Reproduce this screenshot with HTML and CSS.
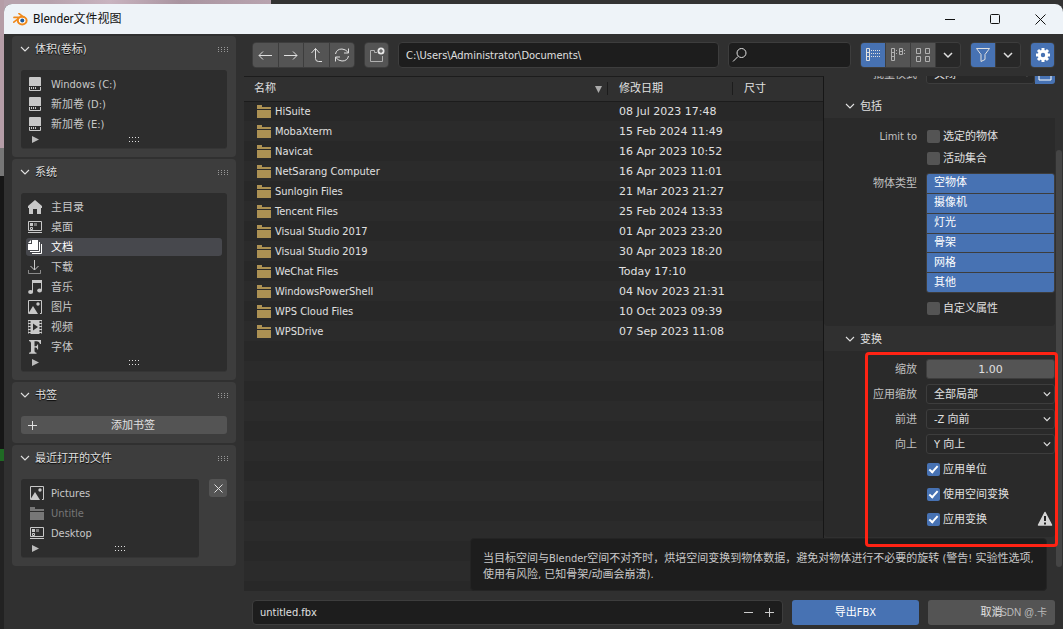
FILE: index.html
```html
<!DOCTYPE html>
<html lang="zh-CN">
<head>
<meta charset="utf-8">
<title>Blender文件视图</title>
<link rel="stylesheet" href="styles.css">
</head>
<body>
<svg class="defs" aria-hidden="true">
  <symbol id="chev" viewBox="0 0 10 10"><path d="M1 3l4 4 4-4" fill="none" stroke="currentColor" stroke-width="1.1"/></symbol>
  <symbol id="chevb" viewBox="0 0 10 10"><path d="M1 3l4 4 4-4" fill="none" stroke="currentColor" stroke-width="1.500"/></symbol>
  <symbol id="grip" viewBox="0 0 11 5"><path d="M0 .5h11M0 4.5h11" stroke="currentColor" stroke-dasharray="1 2"/></symbol>
  <symbol id="grip3" viewBox="0 0 11 5"><path d="M0 .5h11M0 2.5h11M0 4.5h11" stroke="currentColor" stroke-dasharray="1 2"/></symbol>
  <symbol id="disk" viewBox="0 0 14 14"><path d="M1 1a1 1 0 0 1 1-1h10a1 1 0 0 1 1 1v8H1zM1 10h12v3a1 1 0 0 1-1 1H2a1 1 0 0 1-1-1z" fill="currentColor"/><path d="M2 9h10v4H2z" fill="#2d2d2d"/><path d="M3 10h1v2H3zM5 10h1v2H5zM7 10h1v2H7z" fill="currentColor"/></symbol>
  <symbol id="home" viewBox="0 0 14 14"><path d="M7 0l7 6v2h-1v6H9V9H5v5H1V8H0V6z" fill="currentColor"/></symbol>
  <symbol id="desk" viewBox="0 0 14 14"><path d="M.5 1.500h13v9H.5zM0 12.500h14" fill="none" stroke="currentColor"/><path d="M2 3h3v3H2z" fill="currentColor"/><path d="M6 3h3v3H6z" fill="currentColor" opacity=".5"/><path d="M2.500 7.500h2v2h-2z" fill="none" stroke="currentColor"/></symbol>
  <symbol id="docs" viewBox="0 0 14 14"><path d="M4 0h6v10H0V4h4z" fill="currentColor"/><path d="M0 3l3-3v3z" fill="currentColor"/><path d="M11.500 2v9.500H2M13.500 4v9.500H4" fill="none" stroke="currentColor"/></symbol>
  <symbol id="down" viewBox="0 0 14 14"><path d="M6.500 0v10M2.500 6l4 4 4-4" fill="none" stroke="currentColor"/><path d="M.5 10v3.500h12V10" fill="none" stroke="currentColor" opacity=".6"/></symbol>
  <symbol id="music" viewBox="0 0 14 14"><path d="M4 0h10v10h-1V3H5v9H4z" fill="currentColor"/><ellipse cx="2.600" cy="12" rx="2.500" ry="2" fill="currentColor"/><ellipse cx="11.600" cy="10.500" rx="2.400" ry="2" fill="currentColor"/></symbol>
  <symbol id="image" viewBox="0 0 14 14"><path d="M.5 13V.5h13v13H12" fill="none" stroke="currentColor"/><path d="M0 14l5-8 5 8z" fill="currentColor"/><circle cx="10" cy="4" r="1.700" fill="currentColor"/></symbol>
  <symbol id="film" viewBox="0 0 14 14"><path d="M0 0h14v14H0z" fill="currentColor"/><path d="M5 3.500v7L10 7z" fill="#2d2d2d"/><path d="M1.500 1v13M12.500 1v13" stroke="#2d2d2d" stroke-width="2" stroke-dasharray="2 1"/></symbol>
  <symbol id="font" viewBox="0 0 14 14"><path d="M1 0h12v4h-1q-.5-2.700-3-2.700H6.500v5h1.200q1.500 0 1.600-1.800h.8v5h-.8q-.1-1.900-1.600-1.900H6.500v3.600q0 1.300 2 1.500v1H1v-1q2-.2 2-1.500V3q0-1.600-2-1.900z" fill="currentColor"/></symbol>
  <symbol id="folder" viewBox="0 0 14 14"><path d="M0 1h5v2h9v2H0zM0 6h14v8H0z" fill="currentColor"/></symbol>
</svg>
<main class="window">
  <header class="titlebar">
    <svg class="logo" width="15" height="13" viewBox="0 0 15 13"><path d="M6 .6l6.500 5M1 4.400h7M.8 9.200L7 4.400" fill="none" stroke="#f08a1c" stroke-width="1.700" stroke-linecap="round"/><ellipse cx="9.200" cy="7.600" rx="4.400" ry="3.800" fill="#fff" stroke="#f08a1c" stroke-width="2"/><circle cx="9.300" cy="7.400" r="2" fill="#1f5b9c"/></svg>
    <h1>Blender文件视图</h1>
    <div class="winbtns">
      <button aria-label="最小化"><svg width="11" height="11"><path d="M0 5.500h10" stroke="#111"/></svg></button>
      <button aria-label="最大化"><svg width="11" height="11"><rect x=".5" y=".5" width="9" height="9" rx="1" fill="none" stroke="#111"/></svg></button>
      <button aria-label="关闭"><svg width="11" height="11"><path d="M.5.5l10 10M10.500.5l-10 10" stroke="#111"/></svg></button>
    </div>
  </header>
  <div class="body">
    <aside class="side">
      <section class="panel">
        <h2><svg class="i10"><use href="#chev"/></svg>体积(卷标)<svg class="grip"><use href="#grip3"/></svg></h2>
        <div class="list">
          <button class="item"><svg class="i14"><use href="#disk"/></svg>Windows (C:)</button>
          <button class="item"><svg class="i14"><use href="#disk"/></svg>新加卷 (D:)</button>
          <button class="item"><svg class="i14"><use href="#disk"/></svg>新加卷 (E:)</button>
          <div class="foot"><svg width="7" height="7"><path d="M0 0l7 3.500L0 7z" fill="#bbb"/></svg><svg class="grip"><use href="#grip"/></svg></div>
        </div>
      </section>
      <section class="panel">
        <h2><svg class="i10"><use href="#chev"/></svg>系统<svg class="grip"><use href="#grip3"/></svg></h2>
        <div class="list">
          <button class="item"><svg class="i14"><use href="#home"/></svg>主目录</button>
          <button class="item"><svg class="i14"><use href="#desk"/></svg>桌面</button>
          <button class="item on"><svg class="i14"><use href="#docs"/></svg>文档</button>
          <button class="item"><svg class="i14"><use href="#down"/></svg>下载</button>
          <button class="item"><svg class="i14"><use href="#music"/></svg>音乐</button>
          <button class="item"><svg class="i14"><use href="#image"/></svg>图片</button>
          <button class="item"><svg class="i14"><use href="#film"/></svg>视频</button>
          <button class="item"><svg class="i14"><use href="#font"/></svg>字体</button>
          <div class="foot"><svg width="7" height="7"><path d="M0 0l7 3.500L0 7z" fill="#bbb"/></svg><svg class="grip"><use href="#grip"/></svg></div>
        </div>
      </section>
      <section class="panel">
        <h2><svg class="i10"><use href="#chev"/></svg>书签<svg class="grip"><use href="#grip3"/></svg></h2>
        <button class="add"><svg width="9" height="9"><path d="M4.500 0v9M0 4.500h9" stroke="#e0e0e0"/></svg><span>添加书签</span></button>
      </section>
      <section class="panel">
        <h2><svg class="i10"><use href="#chev"/></svg>最近打开的文件<svg class="grip"><use href="#grip3"/></svg></h2>
        <div class="recent">
          <div class="list wide">
            <button class="item"><svg class="i14"><use href="#image"/></svg>Pictures</button>
            <button class="item dim"><svg class="i14"><use href="#folder"/></svg>Untitle</button>
            <button class="item"><svg class="i14"><use href="#desk"/></svg>Desktop</button>
            <div class="foot"><svg width="7" height="7"><path d="M0 0l7 3.500L0 7z" fill="#bbb"/></svg><svg class="grip"><use href="#grip"/></svg></div>
          </div>
          <button class="clear" aria-label="清除"><svg width="9" height="9"><path d="M.5.5l8 8M8.500.5l-8 8" stroke="#e0e0e0"/></svg></button>
        </div>
      </section>
    </aside>
    <div class="content">
      <div class="toolbar">
        <div class="group nav">
          <button aria-label="后退"><svg width="16" height="16"><path d="M15 8.500H2M6 4.500l-4 4 4 4"/></svg></button>
          <button aria-label="前进"><svg width="16" height="16"><path d="M1 8.500h13M10 4.500l4 4-4 4"/></svg></button>
          <button aria-label="上级"><svg width="16" height="16"><path d="M3.500 6l4-4.500 4 4.500M7.500 1.500v10q0 3 3 3H14"/></svg></button>
          <button aria-label="刷新"><svg width="16" height="16"><path d="M1.500 7Q2.500 2 8 2q4 0 6.500 4M14.500 1.500V6H10M14.500 9q-1 5-6.500 5-4 0-6.500-4M1.500 14.500V10H6"/></svg></button>
        </div>
        <div class="group single"><button aria-label="新建文件夹"><svg width="16" height="16"><path d="M8 5.500H5.500v-2h-4v11h12V9" class="faint"/><circle cx="12" cy="4" r="3.500" class="solid"/><path d="M12 2v4M10 4h4" class="cut"/></svg></button></div>
        <input class="path" aria-label="路径" value="C:\Users\Administrator\Documents\">
        <label class="search"><svg width="16" height="16"><circle cx="9.500" cy="6" r="4.500"/><path d="M6 9.500L1 14.500"/></svg><input aria-label="搜索"></label>
        <div class="group">
          <button class="blue" aria-label="垂直列表"><svg width="16" height="16"><path d="M1.500 1.500h3v12h-3zM1.500 5.500h3M1.500 9.500h3"/><path d="M6 3.500h9M6 6.500h9M6 9.500h9" stroke-dasharray="1 1"/></svg></button>
          <button aria-label="水平列表"><svg class="faint" width="16" height="16"><path d="M1.500 1.500h3v12h-3zM1.500 5.500h3M1.500 9.500h3M9.500 1.500h3v6h-3zM9.500 4.500h3"/><path d="M6.500 3v6M14.500 3v5" stroke-dasharray="1 2"/></svg></button>
          <button aria-label="缩略图"><svg class="faint" width="16" height="16"><path d="M1.500 1.500h4v5h-4zM10.500 1.500h4v5h-4zM1.500 9.500h4v5h-4zM10.500 9.500h4v5h-4z"/></svg></button>
          <button class="dark" aria-label="显示设置"><svg class="i10"><use href="#chevb"/></svg></button>
        </div>
        <div class="group">
          <button class="blue" aria-label="筛选"><svg width="16" height="16"><path d="M1.500 1.500h13L10 7.500v5l-4 2v-7z"/></svg></button>
          <button class="dark" aria-label="筛选设置"><svg class="i10"><use href="#chevb"/></svg></button>
        </div>
        <div class="group single"><button class="blue" aria-label="选项"><svg width="16" height="16"><circle cx="8" cy="8" r="3.700" class="ring"/><path class="teeth" d="M8 1v3M8 12v3M1 8h3M12 8h3M3 3l2.200 2.200M10.800 10.800L13 13M3 13l2.200-2.200M10.800 5.200L13 3"/></svg></button></div>
      </div>
      <div class="mid">
        <div class="files">
          <table>
            <colgroup><col class="c1"><col class="c2"><col class="c3"></colgroup>
            <thead><tr><th><span class="sort">名称<svg width="7" height="7"><path d="M0 0h7L3.500 7z" fill="#aaa"/></svg></span></th><th>修改日期</th><th>尺寸</th></tr></thead>
            <tbody>
              <tr><td><span class="name"><svg class="i14"><use href="#folder"/></svg>HiSuite</span></td><td>08 Jul 2023 17:48</td><td></td></tr>
              <tr><td><span class="name"><svg class="i14"><use href="#folder"/></svg>MobaXterm</span></td><td>15 Feb 2024 11:49</td><td></td></tr>
              <tr><td><span class="name"><svg class="i14"><use href="#folder"/></svg>Navicat</span></td><td>16 Apr 2023 10:52</td><td></td></tr>
              <tr><td><span class="name"><svg class="i14"><use href="#folder"/></svg>NetSarang Computer</span></td><td>16 Apr 2023 11:01</td><td></td></tr>
              <tr><td><span class="name"><svg class="i14"><use href="#folder"/></svg>Sunlogin Files</span></td><td>21 Mar 2023 21:27</td><td></td></tr>
              <tr><td><span class="name"><svg class="i14"><use href="#folder"/></svg>Tencent Files</span></td><td>25 Feb 2024 13:33</td><td></td></tr>
              <tr><td><span class="name"><svg class="i14"><use href="#folder"/></svg>Visual Studio 2017</span></td><td>01 Apr 2023 23:20</td><td></td></tr>
              <tr><td><span class="name"><svg class="i14"><use href="#folder"/></svg>Visual Studio 2019</span></td><td>30 Apr 2023 18:20</td><td></td></tr>
              <tr><td><span class="name"><svg class="i14"><use href="#folder"/></svg>WeChat Files</span></td><td>Today 17:10</td><td></td></tr>
              <tr><td><span class="name"><svg class="i14"><use href="#folder"/></svg>WindowsPowerShell</span></td><td>04 Nov 2023 21:31</td><td></td></tr>
              <tr><td><span class="name"><svg class="i14"><use href="#folder"/></svg>WPS Cloud Files</span></td><td>10 Oct 2023 09:39</td><td></td></tr>
              <tr><td><span class="name"><svg class="i14"><use href="#folder"/></svg>WPSDrive</span></td><td>07 Sep 2023 11:08</td><td></td></tr>
            </tbody>
          </table>
          <div class="empty"></div>
        </div>
        <div class="props">
          <div class="sections">
            <div class="row batch">
              <label for="batch">批量模式</label>
              <div class="pair"><span class="select"><select id="batch"><option>关闭</option></select><svg class="i8"><use href="#chevb"/></svg></span><button class="own" aria-label="批量自身目录"><svg width="16" height="16"><path d="M2 2h12v12H2z" fill="none" stroke="#fff"/></svg></button></div>
            </div>
            <h3><svg class="i10"><use href="#chev"/></svg>包括</h3>
            <div class="fields">
              <div class="row"><span class="lab">Limit to</span><label class="check"><input type="checkbox">选定的物体</label></div>
              <div class="row tight"><span></span><label class="check"><input type="checkbox">活动集合</label></div>
              <div class="row"><span class="lab">物体类型</span>
                <div class="types"><button>空物体</button><button>摄像机</button><button>灯光</button><button>骨架</button><button>网格</button><button>其他</button></div>
              </div>
              <div class="row"><span></span><label class="check"><input type="checkbox">自定义属性</label></div>
            </div>
            <h3><svg class="i10"><use href="#chev"/></svg>变换</h3>
            <div class="fields">
              <div class="row"><label for="scale">缩放</label><input id="scale" class="num" value="1.00"></div>
              <div class="row"><label for="apply">应用缩放</label><span class="select"><select id="apply"><option>全部局部</option></select><svg class="i8"><use href="#chevb"/></svg></span></div>
              <div class="row"><label for="fwd">前进</label><span class="select"><select id="fwd"><option>-Z 向前</option></select><svg class="i8"><use href="#chevb"/></svg></span></div>
              <div class="row"><label for="up">向上</label><span class="select"><select id="up"><option>Y 向上</option></select><svg class="i8"><use href="#chevb"/></svg></span></div>
              <div class="row"><span></span><label class="check"><input type="checkbox" checked>应用单位</label></div>
              <div class="row"><span></span><label class="check"><input type="checkbox" checked>使用空间变换</label></div>
              <div class="row"><span></span><div class="warnrow"><label class="check"><input type="checkbox" checked>应用变换</label><svg width="16" height="16"><path d="M8 1.500L14.500 14h-13z" fill="#d4d4d4" stroke="#d4d4d4" stroke-width="1.500" stroke-linejoin="round"/><path d="M8 5v5M8 11.500v2" stroke="#222" stroke-width="2"/></svg></div></div>
              <div class="mark"></div>
            </div>
          </div>
          <div class="scroll"><div class="thumb"></div></div>
        </div>
        <div class="tip" role="tooltip">当目标空间与Blender空间不对齐时<span class="comma">，</span>烘培空间变换到物体数据<span class="comma">，</span>避免对物体进行不必要的旋转 (警告! 实验性选项, <br>使用有风险, 已知骨架/动画会崩溃).</div>
      </div>
      <footer>
        <div class="fname"><input aria-label="文件名" value="untitled.fbx"><button aria-label="减"><svg width="9" height="9"><path d="M0 4.500h9" stroke="#ccc"/></svg></button><button aria-label="加"><svg width="9" height="9"><path d="M4.500 0v9M0 4.500h9" stroke="#ccc"/></svg></button></div>
        <button class="act go">导出FBX</button>
        <button class="act">取消<span class="wm">CSDN @.卡</span></button>
      </footer>
    </div>
  </div>
</main>
</body>
</html>
```

FILE: styles.css
```css
* { box-sizing: border-box; }
body {
  margin: 0;
  min-height: 100vh;
  padding: 4px 0 0 4px;
  display: flex;
  background:
    linear-gradient(#b59da7 0 148px, #777 148px 176px, #161616 176px 449px, #1f6a24 449px 461px, #222 461px) 0 0 / 4px 100% no-repeat,
    linear-gradient(90deg, #b7a2ad 0 50px, #c9b4c0 110px, #a994a0 180px, #b8a3af 271px, #333 271px) 0 0 / 100% 12px no-repeat,
    #222;
  font: 11px/16px "DejaVu Sans Condensed", "Noto Sans CJK SC", sans-serif;
  color: #e0e0e0;
}
button, input, select { font: inherit; color: inherit; border: 0; margin: 0; padding: 0; background: none; min-width: 0; }
svg { flex: none; display: block; }
h1, h2, h3 { margin: 0; font: inherit; }
.defs { position: absolute; width: 0; height: 0; }
.i8 { width: 8px; height: 8px; }
.i10 { width: 10px; height: 10px; }
.i14 { width: 14px; height: 14px; }
.grip { width: 11px; height: 5px; }

.window { flex: 1; min-width: 0; display: flex; flex-direction: column; background: #303030; border-radius: 8px 8px 0 0; overflow: hidden; }
.titlebar { height: 30px; background: #eef3f8; color: #111; display: flex; align-items: center; padding-left: 9px; }
.titlebar h1 { font: 12px/16px Roboto, "Noto Sans CJK SC", sans-serif; margin-left: 5px; flex: 1; }
.winbtns { display: flex; }
.winbtns button { width: 45px; height: 30px; display: grid; place-items: center; }
.body { flex: 1; display: flex; min-height: 0; }

.side { width: 240px; flex: none; padding: 2px 8px; display: flex; flex-direction: column; gap: 2px; }
.panel { background: #3d3d3d; border-radius: 4px; padding: 0 9px 9px; }
.panel h2 { height: 26px; margin: 0 -2px 8px -1px; padding-top: 2px; display: flex; align-items: center; gap: 5px; text-shadow: 0 1px 1px #000; }
.panel h2 svg, .item svg, .name svg, h3 svg { margin-top: -2px; }
.panel h2 .grip { margin-left: auto; color: #999; }
.list { background: #2d2d2d; border-radius: 3px; padding: 5px 5px 0; box-shadow: 0 1px #353535; }
.item { display: flex; align-items: center; gap: 9px; width: 100%; height: 18px; margin-bottom: 2px; padding: 2px 0 0 2px; border-radius: 3px; color: #c8c8c8; text-align: left; }
.item.on { background: #47484d; color: #fff; }
.item.dim { color: #777; }
.wide .item { padding-left: 4px; gap: 7px; }
.foot { height: 13px; display: grid; grid-template-columns: 1fr auto 1fr; align-items: center; padding: 0 5px 4px 6px; }
.foot .grip { margin-left: 20px; }
.add { width: 100%; height: 18px; background: #545454; border-radius: 3px; display: flex; align-items: center; gap: 2px; padding-left: 7px; }
.add span { flex: 1; text-align: center; padding-top: 1px; }
.recent { display: flex; gap: 10px; align-items: flex-start; }
.recent .list { flex: 1; }
.clear { width: 18px; height: 18px; background: #545454; border-radius: 3px; display: grid; place-items: center; }

.content { flex: 1; min-width: 0; display: flex; flex-direction: column; }
.toolbar { display: flex; gap: 9px; padding: 8px; height: 42px; }
.group { flex: none; display: flex; gap: 1px; border: 1px solid #3d3d3d; border-radius: 4px; overflow: hidden; background: #3d3d3d; }
.group button { width: 24px; background: #545454; display: grid; place-items: center; }
.nav { width: 103px; }
.nav button { flex: 1; }
.single button { width: 23px; }
.toolbar svg { fill: none; stroke: #e0e0e0; }
.toolbar .faint { stroke: #b0b0b0; }
.toolbar .solid { fill: #e6e6e6; stroke: none; }
.toolbar .cut { stroke: #444; }
.toolbar .ring, .toolbar .teeth { stroke: #fff; stroke-width: 3; }
.group .blue { background: #4772b3; }
.group .dark { background: #282828; }
.path, .search { background: #1d1d1d; border: 1px solid #3d3d3d; border-radius: 4px; }
.path { flex: 1; padding: 2px 7px 0; }
.search { width: 123px; flex: none; display: flex; align-items: center; padding-left: 3px; }
.search input { flex: 1; width: 0; }

.mid { flex: 1; display: flex; min-height: 0; position: relative; }
.files { flex: 1; min-width: 0; display: flex; flex-direction: column; border-top: 1px solid #1c1c1c; border-right: 1px solid #161616; background: #282828; }
table { width: 100%; border-collapse: collapse; table-layout: fixed; }
.c2 { width: 125px; }
.c3 { width: 91px; }
th { height: 24px; padding: 1px 10px 0 12px; font-weight: 400; text-align: left; background: linear-gradient(#1c1c1c, #1c1c1c) 0 50% / 1px 13px no-repeat, #303030; border-bottom: 1px solid #1c1c1c; }
th:first-child { background: #303030; padding: 1px 5px 0 10px; }
.sort { display: flex; justify-content: space-between; align-items: center; }
td { height: 20px; padding: 2px 0 0 12px; font-family: "DejaVu Sans", sans-serif; }
td:first-child { padding-left: 13px; font-family: "DejaVu Sans Condensed", sans-serif; }
tbody tr:nth-child(even) { background: #2b2b2b; }
.name { display: flex; align-items: center; gap: 4px; }
.name svg { color: #ac9153; }
.empty { flex: 1; background: repeating-linear-gradient(#282828 0 20px, #2b2b2b 20px 40px); }

.props { width: 239px; flex: none; display: flex; overflow: hidden; }
.sections { flex: 1; min-width: 0; }
.row { display: grid; grid-template-columns: 93px minmax(0, 1fr); column-gap: 9px; align-items: start; height: auto; line-height: 20px; }
.row > label:first-child, .lab { height: 20px; padding-top: 1px; text-align: right; color: #c0c0c0; }
.batch { margin: -12px 0 9px; }
.pair { display: grid; grid-template-columns: 1fr 20px; }
.own { background: #4772b3; height: 20px; border-radius: 0 3px 3px 0; display: grid; place-items: center; }
h3 { height: 25px; padding: 2px 0 0 21px; display: flex; align-items: center; gap: 5px; }
.fields { position: relative; background: #2a2a2a; padding: 8px 0; border-radius: 0 0 4px 4px; display: grid; gap: 5px; }
.tight { margin-top: -3px; }
.check { display: flex; align-items: center; gap: 3px; height: 20px; padding-top: 2px; }
.check input { appearance: none; width: 13px; height: 13px; background: #545454; border-radius: 2px; display: grid; place-items: center; margin: -2px 0 0 1px; }
.check input:checked { background: #4772b3; }
.check input:checked::after { content: ""; width: 7px; height: 3px; border: solid #fff; border-width: 0 0 2px 2px; transform: translateY(-1px) rotate(-48deg); }
.types { display: grid; gap: 1px; background: #3d3d3d; border: 1px solid #3d3d3d; border-radius: 3px; overflow: hidden; height: 120px; grid-auto-rows: 1fr; }
.types button { background: #4772b3; color: #fff; text-align: left; padding-left: 7px; line-height: 18px; }
.num { height: 20px; width: 100%; padding-top: 1px; background: #545454; border: 1px solid #3d3d3d; border-radius: 3px; text-align: center; font-family: "DejaVu Sans", sans-serif; }
.select { display: grid; grid-template-columns: minmax(0, 1fr) 11px; align-items: center; height: 20px; background: #282828; border: 1px solid #3d3d3d; border-radius: 3px; }
.select select { appearance: none; grid-area: 1 / 1 / 2 / 3; height: 18px; padding-left: 7px; }
.select svg { grid-area: 1 / 2; pointer-events: none; }
.warnrow { display: flex; justify-content: space-between; align-items: center; padding-right: 2px; }
.mark { position: absolute; z-index: 3; left: 41px; right: -3px; top: 1px; bottom: -10px; border: 3px solid #ff2314; border-radius: 4px; pointer-events: none; }
.scroll { width: 8px; margin: 8px 0; padding: 66px 1px 16px; }
.thumb { height: 100%; background: #454545; border-radius: 3px; }
.tip { position: absolute; z-index: 2; right: 16px; bottom: 0; width: 577px; padding: 10px 0 7px 12px; background: #1d1d1d; border: 1px solid #242424; border-radius: 4px; color: #c8c8c8; white-space: nowrap; }
.comma { font-family: "Noto Sans CJK TC", sans-serif; }

footer { display: flex; gap: 9px; padding: 9px 8px 4px; }
.fname { flex: 1; min-width: 0; height: 25px; display: flex; align-items: center; background: #1d1d1d; border: 1px solid #3d3d3d; border-radius: 4px; padding: 0 8px 0 7px; gap: 12px; }
.fname input { flex: 1; padding-top: 1px; }
.act { width: 127px; flex: none; height: 25px; padding-top: 1px; background: #545454; border-radius: 3px; position: relative; }
.go { background: #4772b3; color: #fff; }
.wm { position: absolute; right: 8px; top: 5px; font: 10px/16px "Liberation Sans", "Noto Sans CJK SC", sans-serif; color: #bbb; }
```
